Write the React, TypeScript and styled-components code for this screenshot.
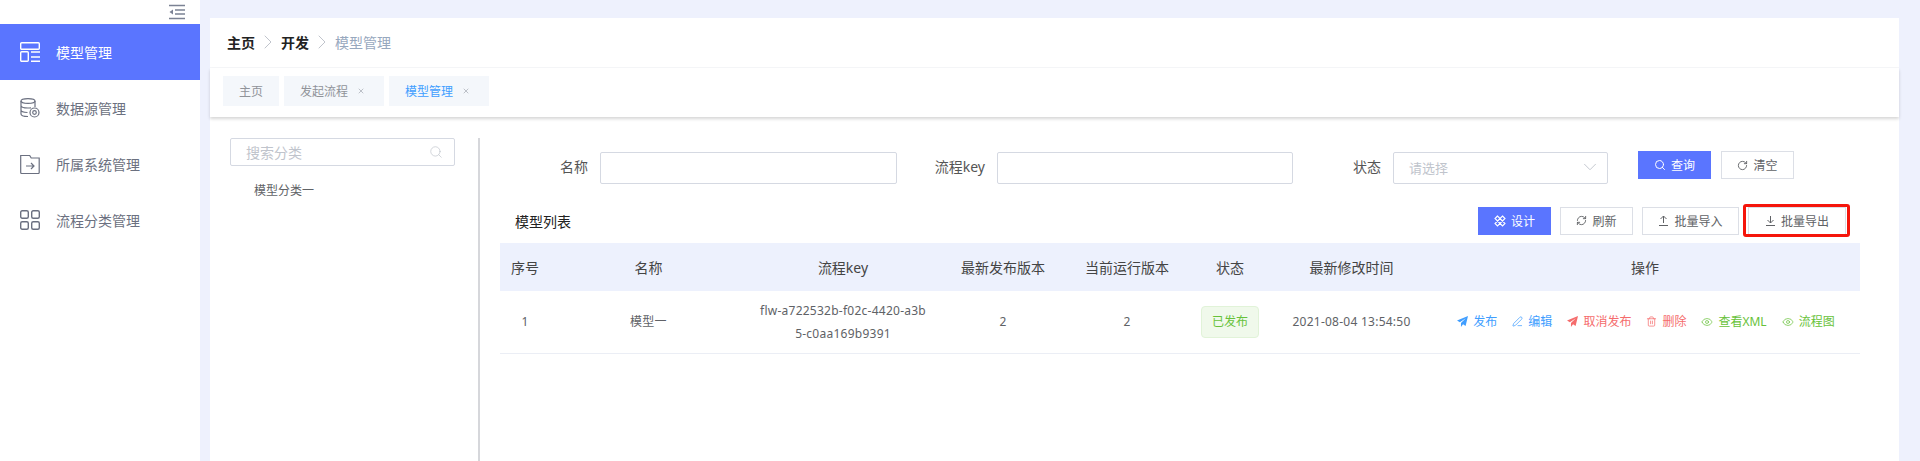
import React from "react";
import styled, { createGlobalStyle } from "styled-components";
import { ChevronDown, ChevronRight, Eye, PenLine, RefreshCw, RotateCw, Search, Trash2, X } from "lucide-react";

const GlobalStyle = createGlobalStyle`
  html, body {
    margin: 0;
    height: 100%;
    overflow: hidden;
    background: #eef1fd;
    font-family: "Noto Sans", "Noto Sans CJK SC", sans-serif;
    font-size: 12px;
    color: #606266;
  }
  #root { height: 100%; }
  * { box-sizing: border-box; }
`;

const PRIMARY = "#5a75ff";

const Layout = styled.div`
  display: flex;
  height: 461px;
`;

const Sidebar = styled.aside`
  flex: 0 0 200px;
  background: #fff;
  margin-right: 10px;
`;

const CollapseRow = styled.div`
  display: flex;
  justify-content: flex-end;
  align-items: center;
  height: 24px;
  padding-right: 15px;
  color: #7b8294;
`;

const MenuItem = styled.div<{ $active?: boolean }>`
  display: flex;
  align-items: center;
  gap: 16px;
  height: 56px;
  padding-left: 20px;
  font-size: 14px;
  background: ${(p) => (p.$active ? PRIMARY : "transparent")};
  color: ${(p) => (p.$active ? "#fff" : "#6b7080")};
`;

const Main = styled.main`
  flex: 1;
  margin: 18px 21px 0 0;
  background: #fff;
  display: flex;
  flex-direction: column;
  min-width: 0;
`;

const Breadcrumb = styled.div`
  display: flex;
  align-items: center;
  height: 50px;
  padding: 0 0 2px 17px;
  font-size: 14px;
  border-bottom: 1px solid #f6f7f9;
`;

const Crumb = styled.span<{ $last?: boolean }>`
  color: ${(p) => (p.$last ? "#97a8be" : "#222")};
  font-weight: ${(p) => (p.$last ? 400 : 700)};
`;

const CrumbSep = styled.span`
  display: flex;
  margin: 0 1px;
  color: #c0c4cc;
`;

const TabBar = styled.div`
  display: flex;
  gap: 5px;
  height: 49px;
  padding: 8px 0 0 13px;
  box-shadow: 0 2px 3px rgba(0, 0, 0, 0.16);
  position: relative;
`;

const Tab = styled.div<{ $active?: boolean }>`
  display: flex;
  align-items: center;
  gap: 9px;
  height: 30px;
  padding: 0 16px;
  background: #f4f7fb;
  color: ${(p) => (p.$active ? "#409eff" : "#909399")};
`;

const TabClose = styled.span`
  display: flex;
  width: 11px;
  color: #a0a4ad;
`;

const Content = styled.div`
  flex: 1;
  display: flex;
  padding-top: 21px;
  min-height: 0;
`;

const TreePane = styled.div`
  flex: 0 0 270px;
  padding: 0 23px 0 20px;
  border-right: 2px solid #d6d7db;
`;

const SearchBox = styled.div`
  display: flex;
  align-items: center;
  justify-content: space-between;
  height: 28px;
  padding: 0 11px 0 15px;
  border: 1px solid #d5d9e2;
  border-radius: 2px;
  font-size: 14px;
  color: #c0c4cc;
`;

const TreeNode = styled.div`
  margin: 16px 0 0 24px;
  line-height: 18px;
  color: #606266;
`;

const ListPane = styled.div`
  flex: 1;
  min-width: 0;
  padding-top: 14px;
`;

const FilterRow = styled.div`
  display: flex;
  align-items: flex-start;
`;

const FieldLabel = styled.label<{ $width: number }>`
  flex: 0 0 ${(p) => p.$width}px;
  margin-right: 12px;
  height: 32px;
  line-height: 30px;
  text-align: right;
  font-size: 14px;
  color: #555;
`;

const TextField = styled.div<{ $width: number }>`
  display: flex;
  align-items: center;
  justify-content: space-between;
  flex: 0 0 ${(p) => p.$width}px;
  height: 32px;
  padding: 0 6px 2px 15px;
  border: 1px solid #d5d9e2;
  border-radius: 2px;
  font-size: 13px;
  color: #c0c4cc;
`;

const FilterActions = styled.div`
  display: flex;
  gap: 10px;
  margin: -1px 0 0 30px;
`;

const Button = styled.button<{ $primary?: boolean; $width: number }>`
  display: flex;
  align-items: center;
  justify-content: center;
  gap: 5px;
  width: ${(p) => p.$width}px;
  height: 28px;
  padding: 0;
  border: 1px solid ${(p) => (p.$primary ? PRIMARY : "#dcdfe6")};
  background: ${(p) => (p.$primary ? PRIMARY : "#fff")};
  color: ${(p) => (p.$primary ? "#fff" : "#606266")};
  font: inherit;
  font-size: 12px;
  position: relative;
`;

const HighlightedButton = styled(Button)`
  &::after {
    content: "";
    position: absolute;
    inset: -4px -5px -3px -6px;
    border: 3px solid #f5150b;
    border-radius: 3px;
  }
`;

const Toolbar = styled.div`
  display: flex;
  align-items: center;
  justify-content: space-between;
  margin: 22px 0 8px 20px;
  width: 1360px;
  padding: 0 14px 0 15px;
  height: 29px;
`;

const ListTitle = styled.span`
  font-size: 14px;
  color: #222;
`;

const ToolbarActions = styled.div`
  display: flex;
  gap: 9px;
  align-items: flex-end;
`;

const Table = styled.table`
  margin-left: 20px;
  width: 1360px;
  table-layout: fixed;
  border-collapse: collapse;
`;

const Col = styled.col<{ $width: number }>`
  width: ${(p) => p.$width}px;
`;

const Th = styled.th`
  height: 48px;
  padding: 0;
  background: #edf1fd;
  font-size: 14px;
  font-weight: 400;
  color: #444;
  text-align: center;
`;

const Td = styled.td`
  height: 62px;
  padding: 0 10px;
  text-align: center;
  line-height: 23px;
  word-break: break-all;
  letter-spacing: 0.25px;
  border-bottom: 1px solid #ebeef5;
  color: #606266;
`;

const Tag = styled.span`
  display: inline-block;
  width: 58px;
  height: 32px;
  line-height: 30px;
  letter-spacing: 0;
  background: #f0f9eb;
  border: 1px solid #e1f3d8;
  border-radius: 4px;
  color: #67c23a;
`;

const Actions = styled.div`
  display: flex;
  justify-content: center;
  gap: 15px;
  padding-left: 2px;
  letter-spacing: 0;
`;

const ActionLink = styled.span<{ $color: string }>`
  display: flex;
  align-items: center;
  gap: 5px;
  color: ${(p) => p.$color};
  white-space: nowrap;
`;

const CollapseIcon = () => (
  <svg width="16" height="16" viewBox="0 0 16 16" fill="none" stroke="currentColor" strokeWidth="1.4">
    <path d="M0 1.5h16M6 6h10M6 10h10M0 14.5h16" />
    <path d="M4 5.5v5L.5 8z" fill="currentColor" stroke="none" />
  </svg>
);

const LayoutIcon = () => (
  <svg width="20" height="20" viewBox="0 0 20 20" fill="none" stroke="currentColor" strokeWidth="1.4">
    <rect x="0.7" y="0.7" width="18.6" height="6.6" rx="1" />
    <rect x="0.7" y="9.7" width="7.6" height="9.6" rx="1" />
    <path d="M11 10h9M11 15h9M11 19.3h9" />
  </svg>
);

const DatabaseIcon = () => (
  <svg width="20" height="20" viewBox="0 0 20 20" fill="none" stroke="currentColor" strokeWidth="1.2">
    <ellipse cx="8" cy="3" rx="7" ry="2.4" />
    <path d="M1 3v13c0 1.4 3 2.5 7 2.5M15 3v6M1 7.5c0 1.4 3 2.5 7 2.5 1 0 2-.1 3-.2M1 12c0 1.4 3 2.4 6.5 2.5" />
    <circle cx="14.5" cy="14.5" r="4.5" />
    <circle cx="14.5" cy="14.5" r="1.8" />
  </svg>
);

const FolderIcon = () => (
  <svg width="20" height="20" viewBox="0 0 20 20" fill="none" stroke="currentColor" strokeWidth="1.2">
    <path d="M.7 1.5h9l1.5 2.5h8v14.5a1 1 0 0 1-1 1H1.7a1 1 0 0 1-1-1z" />
    <path d="M6 12h8M11 9l3 3-3 3" />
  </svg>
);

const GridIcon = () => (
  <svg width="20" height="20" viewBox="0 0 20 20" fill="none" stroke="currentColor" strokeWidth="1.4">
    <rect x="0.7" y="0.7" width="7.6" height="7.6" rx="1.5" />
    <rect x="11.7" y="0.7" width="7.6" height="7.6" rx="1.5" />
    <rect x="0.7" y="11.7" width="7.6" height="7.6" rx="1.5" />
    <rect x="11.7" y="11.7" width="7.6" height="7.6" rx="1.5" />
  </svg>
);

const DesignIcon = () => (
  <svg width="12" height="12" viewBox="0 0 12 12" fill="none" stroke="currentColor" strokeWidth="1.1">
    <path d="M3.5 1L1 3.5l7.5 7.5L11 8.5zM8.5 1L11 3.5 3.5 11 1 8.5z" />
  </svg>
);

const UploadIcon = () => (
  <svg width="11" height="11" viewBox="0 0 11 11" fill="none" stroke="currentColor" strokeWidth="1">
    <path d="M1 10.5h9M5.5 8V1M2.5 4l3-3 3 3" />
  </svg>
);

const DownloadIcon = () => (
  <svg width="11" height="11" viewBox="0 0 11 11" fill="none" stroke="currentColor" strokeWidth="1">
    <path d="M1 10.5h9M5.5 1v7M2.5 5l3 3 3-3" />
  </svg>
);

const PlaneIcon = () => (
  <svg width="11" height="11" viewBox="0 0 10 10" fill="currentColor">
    <path d="M10 0L0 4.2l2.6 1.4L8 2 3.6 6.4V10l1.9-2.4L7.8 9z" />
  </svg>
);

const COLUMNS = [
  ["序号", 50],
  ["名称", 197],
  ["流程key", 192],
  ["最新发布版本", 128],
  ["当前运行版本", 120],
  ["状态", 86],
  ["最新修改时间", 157],
  ["操作", 430],
] as const;

const BLUE = "#409eff";
const RED = "#f56c6c";
const GREEN = "#67c23a";

export default function App() {
  return (
    <Layout>
      <GlobalStyle />
      <Sidebar>
        <CollapseRow>
          <CollapseIcon />
        </CollapseRow>
        <MenuItem $active>
          <LayoutIcon />
          模型管理
        </MenuItem>
        <MenuItem>
          <DatabaseIcon />
          数据源管理
        </MenuItem>
        <MenuItem>
          <FolderIcon />
          所属系统管理
        </MenuItem>
        <MenuItem>
          <GridIcon />
          流程分类管理
        </MenuItem>
      </Sidebar>
      <Main>
        <Breadcrumb>
          <Crumb>主页</Crumb>
          <CrumbSep>
            <ChevronRight size={24} strokeWidth={1} />
          </CrumbSep>
          <Crumb>开发</Crumb>
          <CrumbSep>
            <ChevronRight size={24} strokeWidth={1} />
          </CrumbSep>
          <Crumb $last>模型管理</Crumb>
        </Breadcrumb>
        <TabBar>
          <Tab>主页</Tab>
          <Tab>
            发起流程
            <TabClose>
              <X size={8} />
            </TabClose>
          </Tab>
          <Tab $active>
            模型管理
            <TabClose>
              <X size={8} />
            </TabClose>
          </Tab>
        </TabBar>
        <Content>
          <TreePane>
            <SearchBox>
              搜索分类
              <Search size={14} strokeWidth={1.2} />
            </SearchBox>
            <TreeNode>模型分类一</TreeNode>
          </TreePane>
          <ListPane>
            <FilterRow>
              <FieldLabel $width={108}>名称</FieldLabel>
              <TextField $width={297} />
              <FieldLabel $width={88}>流程key</FieldLabel>
              <TextField $width={296} />
              <FieldLabel $width={88}>状态</FieldLabel>
              <TextField $width={215}>
                请选择
                <ChevronDown size={22} strokeWidth={1} />
              </TextField>
              <FilterActions>
                <Button $primary $width={73}>
                  <Search size={12} />
                  查询
                </Button>
                <Button $width={73}>
                  <RotateCw size={11} />
                  清空
                </Button>
              </FilterActions>
            </FilterRow>
            <Toolbar>
              <ListTitle>模型列表</ListTitle>
              <ToolbarActions>
                <Button $primary $width={73}>
                  <DesignIcon />
                  设计
                </Button>
                <Button $width={73}>
                  <RefreshCw size={11} />
                  刷新
                </Button>
                <Button $width={97}>
                  <UploadIcon />
                  批量导入
                </Button>
                <HighlightedButton $width={98}>
                  <DownloadIcon />
                  批量导出
                </HighlightedButton>
              </ToolbarActions>
            </Toolbar>
            <Table>
              <colgroup>
                {COLUMNS.map(([title, width]) => (
                  <Col key={title} $width={width} />
                ))}
              </colgroup>
              <thead>
                <tr>
                  {COLUMNS.map(([title]) => (
                    <Th key={title}>{title}</Th>
                  ))}
                </tr>
              </thead>
              <tbody>
                <tr>
                  <Td>1</Td>
                  <Td>模型一</Td>
                  <Td>flw-a722532b-f02c-4420-a3b5-c0aa169b9391</Td>
                  <Td>2</Td>
                  <Td>2</Td>
                  <Td>
                    <Tag>已发布</Tag>
                  </Td>
                  <Td>2021-08-04 13:54:50</Td>
                  <Td>
                    <Actions>
                      <ActionLink $color={BLUE}>
                        <PlaneIcon />
                        发布
                      </ActionLink>
                      <ActionLink $color={BLUE}>
                        <PenLine size={11} strokeWidth={1.6} />
                        编辑
                      </ActionLink>
                      <ActionLink $color={RED}>
                        <PlaneIcon />
                        取消发布
                      </ActionLink>
                      <ActionLink $color={RED}>
                        <Trash2 size={11} strokeWidth={1.6} />
                        删除
                      </ActionLink>
                      <ActionLink $color={GREEN}>
                        <Eye size={12} strokeWidth={1.4} />
                        查看XML
                      </ActionLink>
                      <ActionLink $color={GREEN}>
                        <Eye size={12} strokeWidth={1.4} />
                        流程图
                      </ActionLink>
                    </Actions>
                  </Td>
                </tr>
              </tbody>
            </Table>
          </ListPane>
        </Content>
      </Main>
    </Layout>
  );
}
